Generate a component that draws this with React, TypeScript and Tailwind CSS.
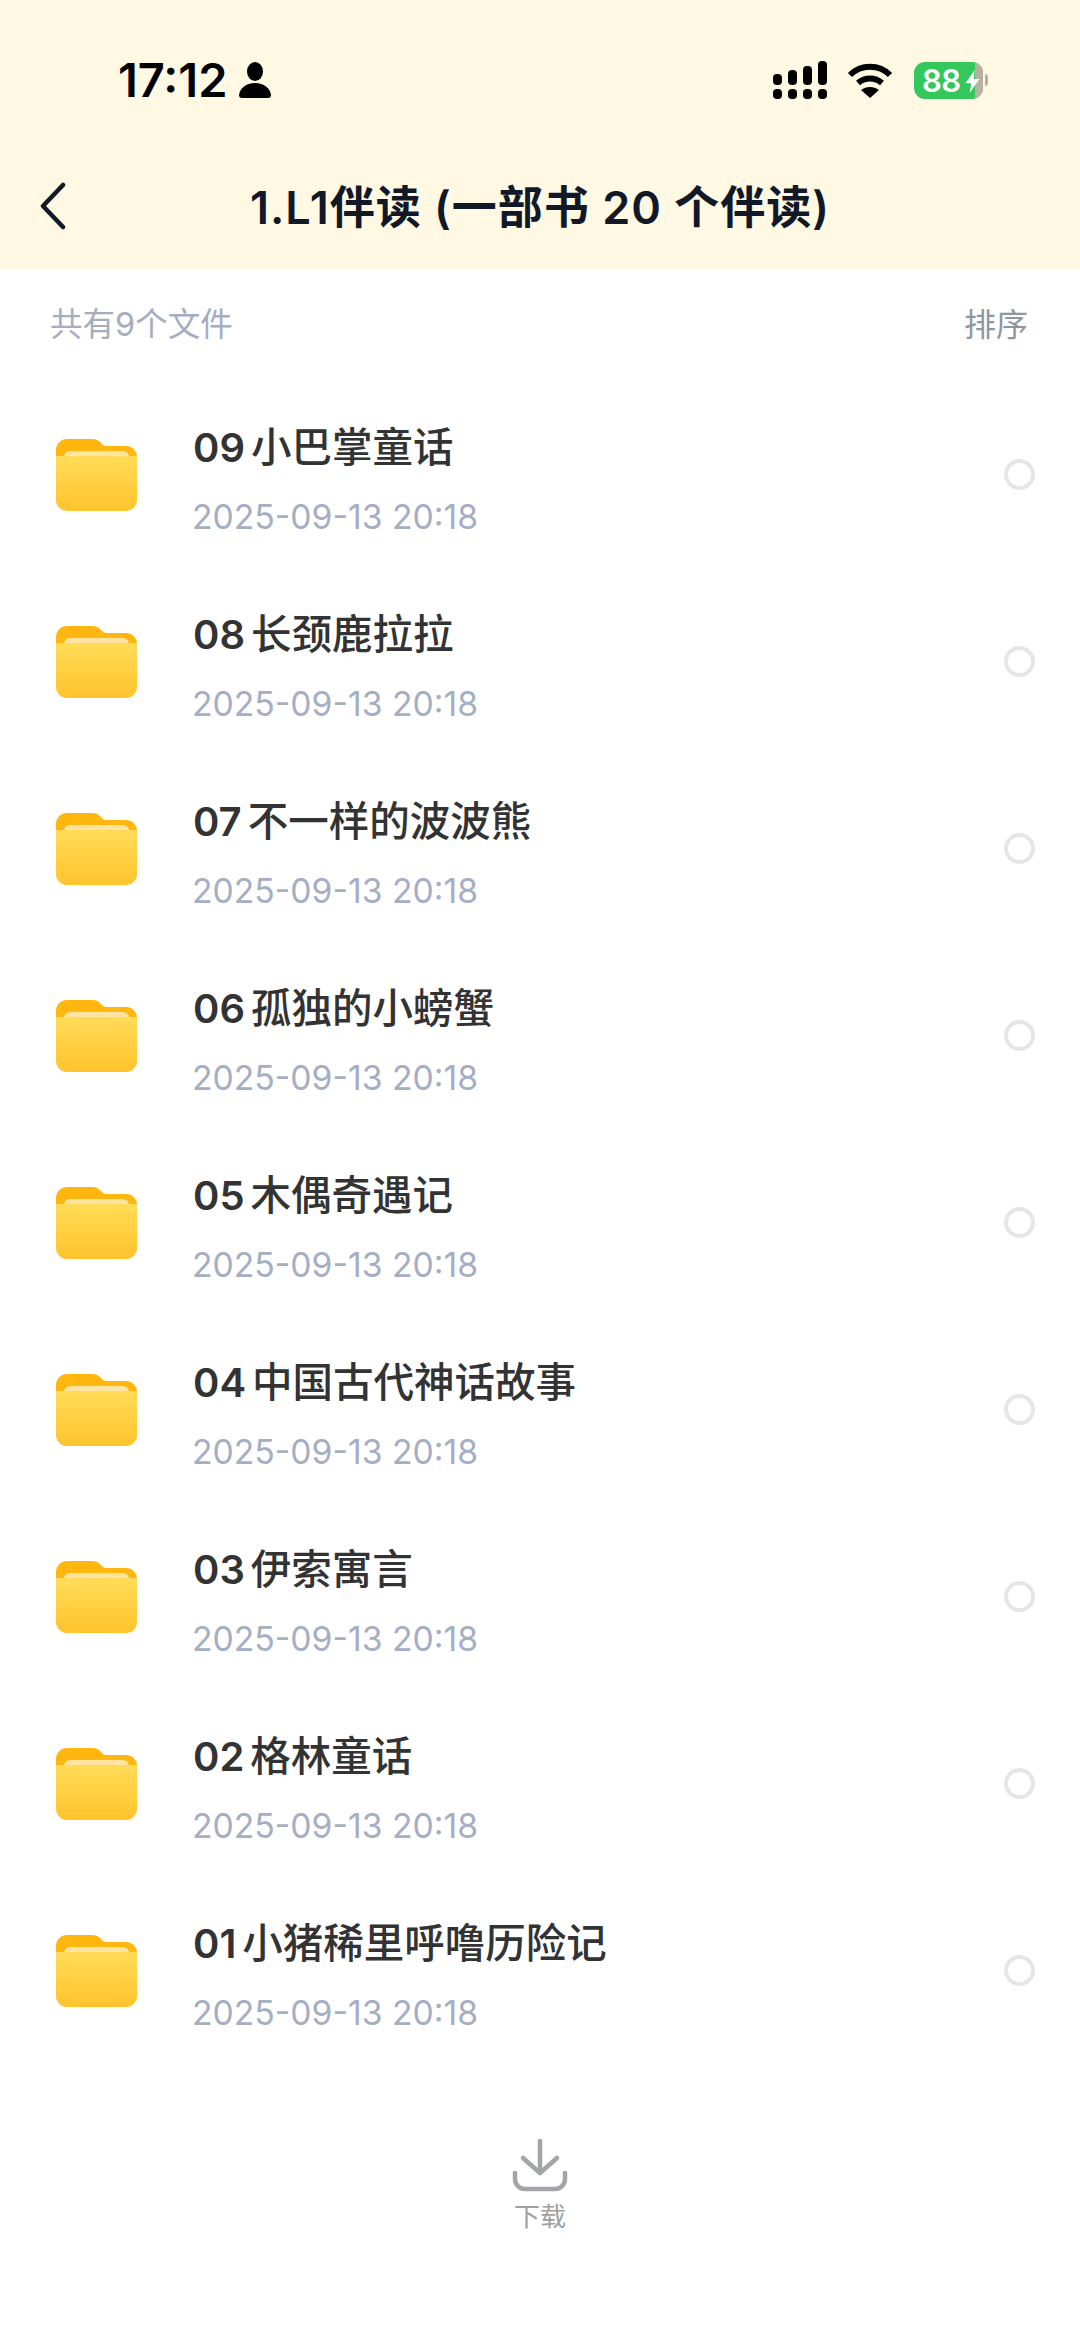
import React from "react";

const items = ["小巴掌童话", "长颈鹿拉拉", "不一样的波波熊", "孤独的小螃蟹", "木偶奇遇记", "中国古代神话故事", "伊索寓言", "格林童话", "小猪稀里呼噜历险记"];
const nums = ["09", "08", "07", "06", "05", "04", "03", "02", "01"];
const font = { fontFamily: '"Inter","Noto Sans CJK SC",sans-serif' };

function Folder() {
  return (
    <svg width="81" height="72" viewBox="0 0 81 72" className="shrink-0">
      <defs>
        <linearGradient id="fb" x1="0" y1="0" x2="0" y2="1">
          <stop offset="0" stopColor="#ffdc58" />
          <stop offset="1" stopColor="#ffc42c" />
        </linearGradient>
      </defs>
      <path d="M0 11A11 11 0 0 1 11 0h25c4 0 6 1 8 3l2 2c2 2 3 2 6 2h18a11 11 0 0 1 11 11v12H0z" fill="#ffb70f" />
      <path d="M8 18a6 6 0 0 1 6-6h53a6 6 0 0 1 6 6v4H8z" fill="#ffe3a0" />
      <path d="M0 17h81v44a11 11 0 0 1-11 11H11A11 11 0 0 1 0 61z" fill="url(#fb)" />
    </svg>
  );
}

function Row({ num, name }: { num: string; name: string }) {
  return (
    <div className="flex h-[187px] items-start">
      <div className="ml-[56px] mt-[48px]"><Folder /></div>
      <div className="ml-[56px] flex-1">
        <div className="mt-[30px] flex h-[54px] items-center text-[40.5px] font-medium text-[#333333]">
          <span className="text-[40px] font-semibold">{num}</span>
          <span className="ml-[6px]">{name}</span>
        </div>
        <div className="-ml-[1px] mt-[22px] text-[33.7px] leading-[40px] text-[#a5aec2]">2025-09-13 20:18</div>
      </div>
      <div className="mr-[45px] mt-[68px] h-[31px] w-[31px] rounded-full border-[4px] border-[#e6e6e6]" />
    </div>
  );
}

export default function App() {
  return (
    <div style={font} className="flex h-[2341px] w-[1080px] flex-col bg-white">
      <div className="h-[269px] bg-[#fff9e4]">
        <div className="flex h-[178px] items-start justify-between pl-[118px] pr-[92px] pt-[55px]">
          <div className="flex items-center">
            <span className="text-[47px] leading-[50px] font-semibold text-black">17:12</span>
            <svg width="32" height="36" viewBox="0 0 32 36" className="ml-[11px]">
              <ellipse cx="16" cy="9.500" rx="8" ry="9.500" fill="#000" />
              <path d="M3 36c-2 0-3-1-3-3 1-7 7-12 16-12s15 5 16 12c0 2-1 3-3 3z" fill="#000" />
            </svg>
          </div>
          <div className="mt-[6px] flex items-center">
            <svg width="54" height="38" viewBox="0 0 54 38">
              <g fill="#000">
                <rect x="0" y="13" width="9" height="11" rx="4" />
                <rect x="15" y="9" width="9" height="15" rx="4" />
                <rect x="30" y="5" width="9" height="19" rx="4" />
                <rect x="45" y="0" width="9" height="24" rx="4" />
                <rect x="0" y="28" width="9" height="10" rx="4" />
                <rect x="15" y="28" width="9" height="10" rx="4" />
                <rect x="30" y="28" width="9" height="10" rx="4" />
                <rect x="45" y="28" width="9" height="10" rx="4" />
              </g>
            </svg>
            <svg width="46" height="36" viewBox="0 0 46 36" className="ml-[20px]">
              <g fill="none" stroke="#000" strokeWidth="6">
                <path d="M3 13c11-11 29-11 40 0" />
                <path d="M11 21c7-6 17-6 24 0" />
              </g>
              <path d="M14 28c5-4 13-4 18 0l-9 8z" fill="#000" />
            </svg>
            <div className="relative ml-[21px] flex h-[37px] w-[69px] items-center overflow-hidden rounded-[11px] bg-[#34c75c]">
              <span className="ml-[8px] text-[31px] leading-[37px] font-semibold text-white tracking-[-0.5px]">88</span>
              <div className="absolute right-0 top-0 h-full w-[8px] bg-[#b8b0a2]" />
              <svg width="15" height="23" viewBox="0 0 17 28" className="absolute left-[51px] top-[8px]">
                <path d="M11 0 0 16h7l-2 12L17 11h-7z" fill="#fff" />
              </svg>
            </div>
            <div className="ml-[2px] h-[12px] w-[3px] rounded-r-full bg-[#b8b0a2]" />
          </div>
        </div>
        <div className="relative flex h-[60px] items-center justify-center">
          <svg width="28" height="48" viewBox="0 0 28 48" className="absolute left-[39px] top-[4px]">
            <path d="M24 3 4 24l20 21" fill="none" stroke="#111827" strokeWidth="4.500" strokeLinecap="round" strokeLinejoin="round" />
          </svg>
          <span className="text-[45px] font-semibold tracking-[1px] text-[#111827]">1.L1伴读 (一部书 20 个伴读)</span>
        </div>
      </div>

      <div className="flex h-[76px] items-center justify-between pl-[50px] pr-[52px] pt-[36px]">
        <span className="text-[32.5px] text-[#a5adc0]">共有9个文件</span>
        <span className="text-[32px] text-[#8f96a3]">排序</span>
      </div>

      <div className="pt-[46px]">
        {items.map((n, i) => <Row key={n} num={nums[i]} name={n} />)}
      </div>

      <div className="mt-[64px] flex flex-col items-center">
        <svg width="56" height="54" viewBox="0 0 56 54">
          <g fill="none" stroke="#a3a4a8" strokeWidth="4.500" strokeLinecap="round" strokeLinejoin="round">
            <path d="M28 3v32" />
            <path d="M11 20l17 15 17-15" />
            <path d="M3 35v6a10 10 0 0 0 10 10h30a10 10 0 0 0 10-10v-6" />
          </g>
        </svg>
        <span className="mt-[7px] text-[26px] leading-[36px] text-[#a0a0a0]">下载</span>
      </div>
    </div>
  );
}
